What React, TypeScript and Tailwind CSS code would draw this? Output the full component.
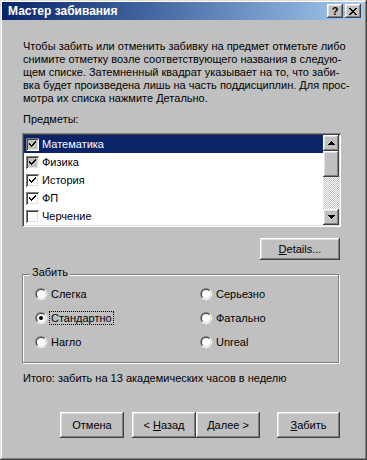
import React from "react";

const raised =
  "bg-[#c0c0c0] shadow-[inset_-1px_-1px_#404040,inset_1px_1px_#ffffff,inset_-2px_-2px_#808080,inset_2px_2px_#dfdfdf]";

function TitleButton({ children }: { children: React.ReactNode }) {
  return (
    <div className={"w-[16px] h-[14px] flex items-center justify-center " + raised}>
      {children}
    </div>
  );
}

function Checkbox({ checked, gray }: { checked: boolean; gray?: boolean }) {
  return (
    <span
      className={
        "w-[13px] h-[13px] shrink-0 flex items-center justify-center shadow-[inset_1px_1px_#808080,inset_-1px_-1px_#ffffff,inset_2px_2px_#404040,inset_-2px_-2px_#dfdfdf] " +
        (gray ? "bg-[#c0c0c0]" : "bg-white")
      }
    >
      {checked && (
        <svg width="13" height="13" viewBox="0 0 13 13" className="block">
          <path d="M3 5 L5 7 L9.5 2.5 L9.5 4.5 L5 9 L3 7 Z" fill="#000" shapeRendering="crispEdges" />
        </svg>
      )}
    </span>
  );
}

function Radio({ checked }: { checked?: boolean }) {
  return (
    <span className="w-[12px] h-[12px] shrink-0 rounded-full border border-t-[#808080] border-l-[#808080] border-r-white border-b-white">
      <span className="w-full h-full rounded-full border border-t-[#404040] border-l-[#404040] border-r-[#dfdfdf] border-b-[#dfdfdf] bg-white flex items-center justify-center">
        {checked && <span className="w-[4px] h-[4px] rounded-full bg-black" />}
      </span>
    </span>
  );
}

function Arrow({ up }: { up?: boolean }) {
  return (
    <svg width="7" height="4" viewBox="0 0 7 4" className="block" shapeRendering="crispEdges">
      {up ? (
        <>
          <rect x="3" y="0" width="1" height="1" fill="#000" />
          <rect x="2" y="1" width="3" height="1" fill="#000" />
          <rect x="1" y="2" width="5" height="1" fill="#000" />
          <rect x="0" y="3" width="7" height="1" fill="#000" />
        </>
      ) : (
        <>
          <rect x="0" y="0" width="7" height="1" fill="#000" />
          <rect x="1" y="1" width="5" height="1" fill="#000" />
          <rect x="2" y="2" width="3" height="1" fill="#000" />
          <rect x="3" y="3" width="1" height="1" fill="#000" />
        </>
      )}
    </svg>
  );
}

const items = [
  { name: "Математика", checked: true, gray: true, selected: true },
  { name: "Физика", checked: true, gray: true },
  { name: "История", checked: true },
  { name: "ФП", checked: true },
  { name: "Черчение", checked: false },
];

function Btn({ w, children }: { w: string; children: React.ReactNode }) {
  return (
    <div className={"h-[26px] flex items-center justify-center " + w + " " + raised}>
      <span className="leading-[13px]">{children}</span>
    </div>
  );
}

export default function App() {
  return (
    <div className="w-[367px] h-[460px] bg-[#c0c0c0] text-black text-[11px] font-['Liberation_Sans',Arial,sans-serif] shadow-[inset_-1px_-1px_#404040,inset_1px_1px_#dfdfdf,inset_-2px_-2px_#808080,inset_2px_2px_#ffffff] pl-[2px] pt-[2px] pr-[4px] flex flex-col">
      {/* Title bar */}
      <div className="h-[18px] bg-linear-to-r from-[#0a246a] to-[#a6caf0] flex items-center pl-[6px] pr-[2px]">
        <span className="text-white font-bold text-[12px] leading-[14px] flex-1">Мастер забивания</span>
        <div className="flex gap-[2px]">
          <TitleButton>
            <span className="font-bold text-[11px] leading-[11px] text-black">?</span>
          </TitleButton>
          <TitleButton>
            <svg width="8" height="7" viewBox="0 0 8 7" shapeRendering="crispEdges" className="block">
              <path d="M0 0h2v1h-2zM6 0h2v1h-2zM1 1h2v1h-2zM5 1h2v1h-2zM2 2h4v1h-4zM3 3h2v1h-2zM2 4h4v1h-4zM1 5h2v1h-2zM5 5h2v1h-2zM0 6h2v1h-2zM6 6h2v1h-2z" fill="#000" />
            </svg>
          </TitleButton>
        </div>
      </div>

      {/* Content */}
      <div className="ml-[20px] w-[319px] flex flex-col">
        <div className="mt-[20px] pl-[1px] leading-[13px] whitespace-nowrap flex flex-col">
          <span>Чтобы забить или отменить забивку на предмет отметьте либо</span>
          <span>снимите отметку возле соответствующего названия в следую-</span>
          <span>щем списке. Затемненный квадрат указывает на то, что заби-</span>
          <span>вка будет произведена лишь на часть поддисциплин. Для прос-</span>
          <span>мотра их списка нажмите Детально.</span>
        </div>

        <div className="mt-[8px] pl-[1px] leading-[13px]">Предметы:</div>

        {/* List box */}
        <div className="mt-[7px] w-[319px] h-[94px] p-[2px] bg-white shadow-[inset_1px_1px_#808080,inset_-1px_-1px_#ffffff,inset_2px_2px_#404040,inset_-2px_-2px_#dfdfdf] flex">
          <div className="flex-1 flex flex-col">
            {items.map((it) => (
              <div
                key={it.name}
                className={
                  "h-[18px] flex items-center gap-[3px] pl-[2px] " +
                  (it.selected ? "bg-[#0a246a] text-white" : "")
                }
              >
                <Checkbox checked={it.checked} gray={it.gray} />
                <span className="leading-[13px]">{it.name}</span>
              </div>
            ))}
          </div>
          <div className="w-[16px] flex flex-col">
            <div className={"h-[16px] flex items-center justify-center " + raised}>
              <Arrow up />
            </div>
            <div className={"h-[26px] " + raised} />
            <div className="flex-1 bg-[image:repeating-conic-gradient(#c0c0c0_0_25%,#ffffff_0_50%)] bg-size-[2px_2px]" />
            <div className={"h-[16px] flex items-center justify-center " + raised}>
              <Arrow />
            </div>
          </div>
        </div>

        {/* Details */}
        <div className={"mt-[11px] self-end mr-[1px] w-[80px] h-[22px] flex items-center justify-center " + raised}>
          <span className="leading-[13px]">
            <span className="underline">D</span>etails...
          </span>
        </div>

        {/* Group box */}
        <div className="relative mt-[14px] w-[317px] h-[89px] border border-[#808080] shadow-[inset_1px_1px_#ffffff,1px_1px_#ffffff]">
          <span className="absolute left-[7px] top-[-9px] px-[2px] bg-[#c0c0c0] leading-[13px]">Забить</span>
          <div className="pt-[7px] pl-[12px] grid grid-cols-[165px_1fr] auto-rows-[24px]">
            <div className="flex items-center gap-[4px]">
              <Radio />
              <span className="leading-[13px]">Слегка</span>
            </div>
            <div className="flex items-center gap-[4px]">
              <Radio />
              <span className="leading-[13px]">Серьезно</span>
            </div>
            <div className="flex items-center gap-[2px]">
              <Radio checked />
              <span className="leading-[12px] border border-dotted border-black px-[1px]">Стандартно</span>
            </div>
            <div className="flex items-center gap-[4px]">
              <Radio />
              <span className="leading-[13px]">Фатально</span>
            </div>
            <div className="flex items-center gap-[4px]">
              <Radio />
              <span className="leading-[13px]">Нагло</span>
            </div>
            <div className="flex items-center gap-[4px]">
              <Radio />
              <span className="leading-[13px]">Unreal</span>
            </div>
          </div>
        </div>

        <div className="mt-[9px] pl-[1px] leading-[13px]">Итого: забить на 13 академических часов в неделю</div>

        {/* Buttons */}
        <div className="mt-[27px] self-end mr-[1px] flex">
          <Btn w="w-[64px]">Отмена</Btn>
          <div className="w-[8px]" />
          <Btn w="w-[64px]">
            &lt; <span className="underline">Н</span>азад
          </Btn>
          <Btn w="w-[64px]">
            <span className="underline">Д</span>алее &gt;
          </Btn>
          <div className="w-[17px]" />
          <Btn w="w-[63px]">
            <span className="underline">З</span>абить
          </Btn>
        </div>
      </div>
    </div>
  );
}
